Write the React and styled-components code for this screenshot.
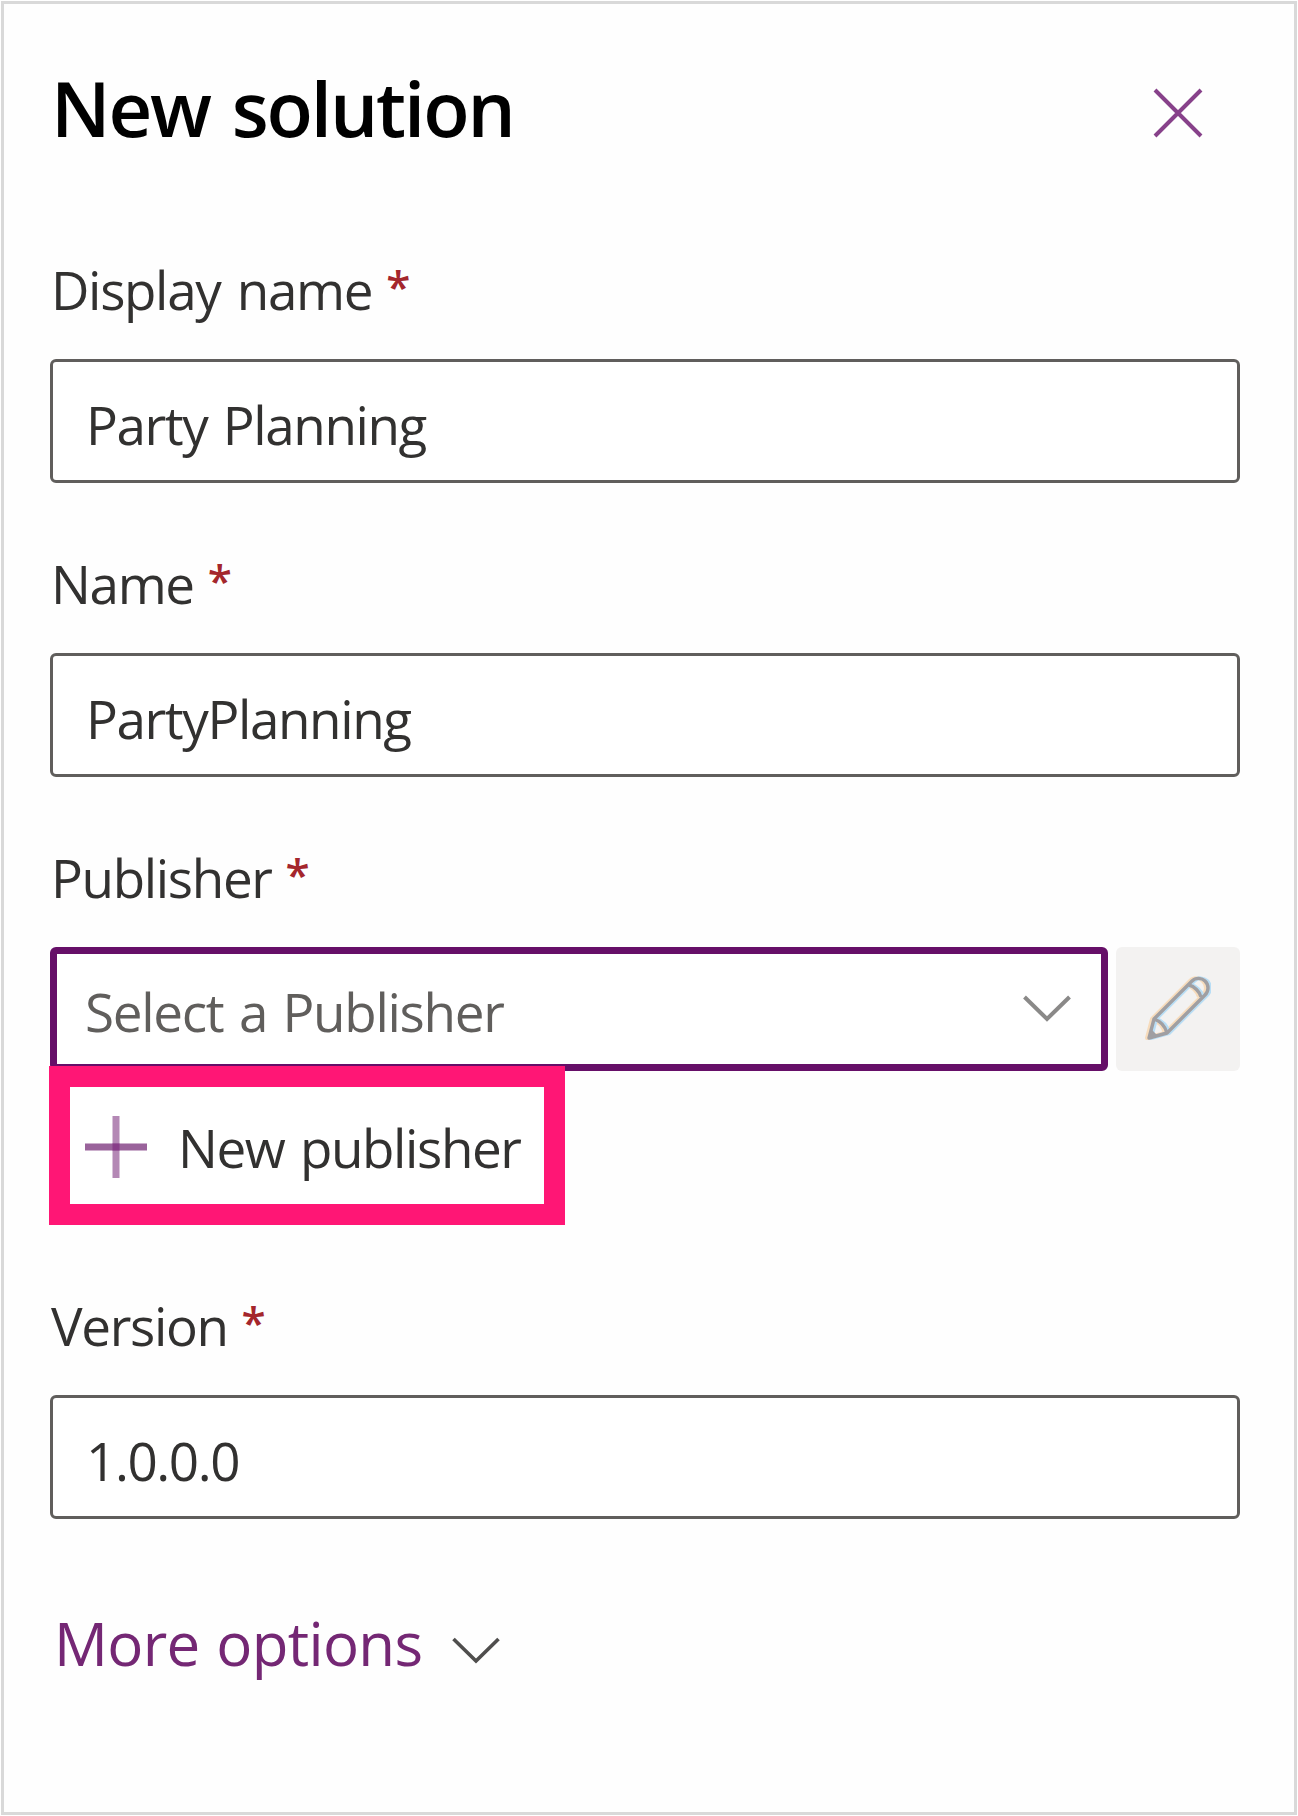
// src/components/NewSolutionPanel.jsx
import React, { useState } from "react";
import styled, { createGlobalStyle } from "styled-components";

const GlobalStyle = createGlobalStyle`
  * {
    box-sizing: border-box;
  }

  body {
    margin: 0;
    background: #ffffff;
    font-family: "Open Sans", "Noto Sans", sans-serif;
  }
`;

const Page = styled.div`
  width: 1298px;
  height: 1816px;
  padding: 1px;
`;

const Panel = styled.section`
  width: 1296px;
  height: 1814px;
  padding: 53px 54px 0 46px;
  background: #fefefe;
  border: 3px solid #d9d9d9;
`;

const Header = styled.header`
  display: flex;
  align-items: center;
  justify-content: space-between;
  height: 100px;
  margin-bottom: 102px;
`;

const Title = styled.h1`
  margin: 1px 0 0 1px;
  color: #000000;
  font-size: 76px;
  font-weight: 600;
  line-height: 100px;
  letter-spacing: -2.1px;
  word-spacing: 4px;
`;

const CloseButton = styled.button`
  display: flex;
  margin: 11px 37px 0 0;
  padding: 0;
  border: none;
  background: none;
`;

const Form = styled.form`
  display: flex;
  flex-direction: column;
`;

const Field = styled.div`
  display: flex;
  flex-direction: column;
  margin-bottom: ${(p) => p.$gap ?? 70}px;
`;

const Label = styled.label`
  display: flex;
  height: 60px;
  margin: 0 0 40px 1px;
  color: #323130;
  font-size: 53px;
  line-height: 61px;
  letter-spacing: -1.35px;
  word-spacing: 4px;
`;

const Required = styled.span`
  margin-left: 14px;
  color: #a4262c;
  font-size: 44px;
  font-weight: 600;
  line-height: 54px;
`;

const Input = styled.input`
  width: 100%;
  height: 124px;
  padding: 6px 30px 0 33px;
  border: 3.5px solid #605e5c;
  border-radius: 6px;
  outline: none;
  background: #ffffff;
  color: #323130;
  font-family: inherit;
  font-size: 53px;
  letter-spacing: -1.4px;
  word-spacing: 3px;
`;

const PublisherRow = styled.div`
  display: flex;
  gap: 8px;
`;

const Dropdown = styled.div`
  display: flex;
  flex: 1;
  align-items: center;
  justify-content: space-between;
  height: 124px;
  padding: 0 30px 0 28px;
  border: 7px solid #660f68;
  border-radius: 6px;
  background: #ffffff;
`;

const DropdownChevron = styled.span`
  display: flex;
  margin-bottom: 2px;
`;

const Placeholder = styled.span`
  padding-top: 6px;
  color: #605e5c;
  font-size: 53px;
  line-height: 72px;
  letter-spacing: -1.3px;
  word-spacing: 3px;
`;

const EditButton = styled.button`
  display: flex;
  align-items: center;
  justify-content: center;
  width: 124px;
  height: 124px;
  padding: 0;
  border: none;
  border-radius: 6px;
  background: #f3f2f1;
`;

// overlaps the bottom edge of the dropdown
const NewPublisher = styled.button`
  position: relative;
  display: flex;
  align-items: center;
  width: 516px;
  height: 159px;
  margin: -5px 0 70px -1px;
  padding: 3px 0 0 15px;
  border: 21px solid #ff1675;
  background: #ffffff;
  color: #323130;
  font-family: inherit;
  font-size: 53px;
  letter-spacing: -1.4px;
  word-spacing: 3px;
`;

const NewPublisherText = styled.span`
  margin: 1px 0 0 31px;
  line-height: 72px;
  white-space: nowrap;
`;

const MoreOptions = styled.button`
  display: flex;
  align-items: center;
  align-self: flex-start;
  height: 70px;
  margin: 19px 0 0 4px;
  padding: 0;
  border: none;
  background: none;
  color: #742774;
  font-family: inherit;
  font-size: 60px;
  line-height: 70px;
  letter-spacing: -0.7px;
  word-spacing: 2px;
`;

const MoreChevron = styled.span`
  display: flex;
  margin: 14px 0 0 30px;
`;

const CloseIcon = () => (
  <svg width="50" height="50" viewBox="0 0 50 50" fill="none">
    <path d="M2 2L48 48M48 2L2 48" stroke="#87418a" strokeWidth="4" />
  </svg>
);

const ChevronIcon = ({ color, width = 3.6 }) => (
  <svg width="48" height="27" viewBox="0 0 48 27" fill="none">
    <path d="M1.5 2L24 24L46.5 2" stroke={color} strokeWidth={width} />
  </svg>
);

const PlusIcon = () => (
  <svg width="62" height="62" viewBox="0 0 62 62">
    <rect x="27.5" y="0" width="7" height="62" fill="#b488b5" />
    <rect x="0" y="27.5" width="62" height="7" fill="#9a639b" />
    <rect x="27.5" y="27.5" width="7" height="7" fill="#883d89" />
  </svg>
);

const PencilIcon = () => (
  <svg width="66" height="66" viewBox="0 0 66 66" fill="none" strokeLinejoin="round">
    <g stroke="#f7dcbc" strokeWidth="4" transform="translate(-2 0)">
      <path d="M4 62L9 43L47 5C51 1 57 2 60 5C64 9 64 15 60 19L22 57Z" />
      <path d="M9 43C15 45 20 50 22 57M44 9C49 10 55 16 56 21" />
    </g>
    <g stroke="#b9def5" strokeWidth="4" transform="translate(2 0)">
      <path d="M4 62L9 43L47 5C51 1 57 2 60 5C64 9 64 15 60 19L22 57Z" />
      <path d="M9 43C15 45 20 50 22 57M44 9C49 10 55 16 56 21" />
    </g>
    <g stroke="#a09fa2" strokeWidth="3.4">
      <path d="M4 62L9 43L47 5C51 1 57 2 60 5C64 9 64 15 60 19L22 57Z" />
      <path d="M9 43C15 45 20 50 22 57M44 9C49 10 55 16 56 21" />
    </g>
    <path d="M4 62L6 53L12 59Z" fill="#a09fa2" />
  </svg>
);

const NewSolutionPanel = () => {
  const [form, setForm] = useState({
    displayName: "Party Planning",
    name: "PartyPlanning",
    version: "1.0.0.0",
  });

  const setValue = (key, value) => {
    setForm((prev) => ({ ...prev, [key]: value }));
  };

  return (
    <>
      <GlobalStyle />
      <Page>
        <Panel>
          <Header>
            <Title>New solution</Title>
            <CloseButton type="button" aria-label="Close">
              <CloseIcon />
            </CloseButton>
          </Header>

          <Form onSubmit={(e) => e.preventDefault()}>
            <Field>
              <Label htmlFor="displayName">
                Display name <Required>*</Required>
              </Label>
              <Input
                id="displayName"
                value={form.displayName}
                onChange={(e) => setValue("displayName", e.target.value)}
              />
            </Field>

            <Field>
              <Label htmlFor="name">
                Name <Required>*</Required>
              </Label>
              <Input
                id="name"
                value={form.name}
                onChange={(e) => setValue("name", e.target.value)}
              />
            </Field>

            <Field $gap={0}>
              <Label>
                Publisher <Required>*</Required>
              </Label>
              <PublisherRow>
                <Dropdown role="combobox" tabIndex={0}>
                  <Placeholder>Select a Publisher</Placeholder>
                  <DropdownChevron>
                    <ChevronIcon color="#8a8988" width={4} />
                  </DropdownChevron>
                </Dropdown>
                <EditButton type="button" aria-label="Edit publisher">
                  <PencilIcon />
                </EditButton>
              </PublisherRow>
            </Field>

            <NewPublisher type="button">
              <PlusIcon />
              <NewPublisherText>New publisher</NewPublisherText>
            </NewPublisher>

            <Field>
              <Label htmlFor="version">
                Version <Required>*</Required>
              </Label>
              <Input
                id="version"
                value={form.version}
                onChange={(e) => setValue("version", e.target.value)}
              />
            </Field>

            <MoreOptions type="button">
              More options
              <MoreChevron>
                <ChevronIcon color="#4f4e4d" />
              </MoreChevron>
            </MoreOptions>
          </Form>
        </Panel>
      </Page>
    </>
  );
};

export default NewSolutionPanel;
